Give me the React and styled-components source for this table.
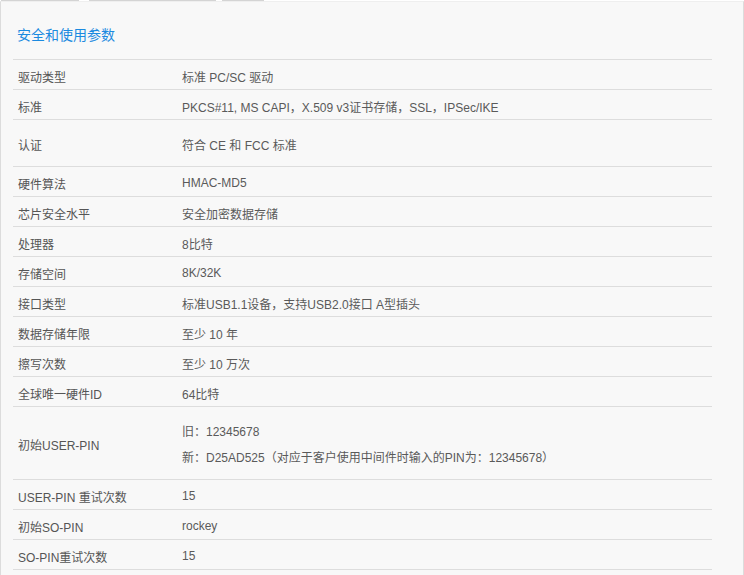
import React from 'react';
import styled, { createGlobalStyle } from 'styled-components';

const GlobalStyle = createGlobalStyle`
  html, body {
    margin: 0;
    padding: 0;
    background: #ffffff;
  }
  body {
    font-family: "Liberation Sans", Arial, "Noto Sans CJK SC", sans-serif;
  }
`;

const Page = styled.div`
  width: 744px;
  height: 575px;
  overflow: hidden;
  display: flex;
  flex-direction: column;
`;

const TabStrip = styled.div`
  display: flex;
  height: 1px;
  background: #ffffff;
`;

const TabEdge = styled.div`
  width: ${(p) => p.w}px;
  margin-left: ${(p) => p.gap || 0}px;
  background: #d4d4d4;
`;

const Panel = styled.div`
  flex: 1;
  background: #f8f8f8;
  border-left: 1px solid #dcdcdc;
  border-right: 1px solid #dcdcdc;
  border-top: 1px solid #efefef;
  padding: 0 31px 0 12px;
`;

const Title = styled.h2`
  margin: 0;
  padding: 25px 0 16px 4px;
  font-size: 14px;
  line-height: 16px;
  font-weight: normal;
  color: #1b8ae0;
`;

const Table = styled.div`
  border-top: 1px solid #dddddd;
`;

const Row = styled.div`
  display: grid;
  grid-template-columns: 169px 1fr;
  align-items: center;
  box-sizing: border-box;
  height: ${(p) => p.h || 30}px;
  padding-top: 3px;
  border-bottom: 1px solid #dddddd;
  font-size: 12px;
  color: #555555;
`;

const Label = styled.div`
  padding-left: 5px;
  white-space: nowrap;
`;

const Value = styled.div`
  white-space: nowrap;
  color: #5a5a5a;
`;

const Line = styled.div`
  line-height: 26px;
`;

const rows = [
  { label: '驱动类型', value: '标准 PC/SC 驱动' },
  { label: '标准', value: 'PKCS#11, MS CAPI，X.509 v3证书存储，SSL，IPSec/IKE' },
  { label: '认证', value: '符合 CE 和 FCC 标准', h: 47 },
  { label: '硬件算法', value: 'HMAC-MD5' },
  { label: '芯片安全水平', value: '安全加密数据存储' },
  { label: '处理器', value: '8比特' },
  { label: '存储空间', value: '8K/32K' },
  { label: '接口类型', value: '标准USB1.1设备，支持USB2.0接口 A型插头' },
  { label: '数据存储年限', value: '至少 10 年' },
  { label: '擦写次数', value: '至少 10 万次' },
  { label: '全球唯一硬件ID', value: '64比特' },
  {
    label: '初始USER-PIN',
    lines: ['旧：12345678', '新：D25AD525（对应于客户使用中间件时输入的PIN为：12345678）'],
    h: 73,
  },
  { label: 'USER-PIN 重试次数', value: '15' },
  { label: '初始SO-PIN', value: 'rockey' },
  { label: 'SO-PIN重试次数', value: '15' },
];

function App() {
  return (
    <Page>
      <GlobalStyle />
      <TabStrip>
        <TabEdge w={78} gap={1} />
        <TabEdge w={127} gap={10} />
        <TabEdge w={42} gap={6} />
      </TabStrip>
      <Panel>
        <Title>安全和使用参数</Title>
        <Table>
          {rows.map((r) => (
            <Row key={r.label} h={r.h}>
              <Label>{r.label}</Label>
              <Value>
                {r.lines ? r.lines.map((l) => <Line key={l}>{l}</Line>) : r.value}
              </Value>
            </Row>
          ))}
        </Table>
      </Panel>
    </Page>
  );
}

export default App;
